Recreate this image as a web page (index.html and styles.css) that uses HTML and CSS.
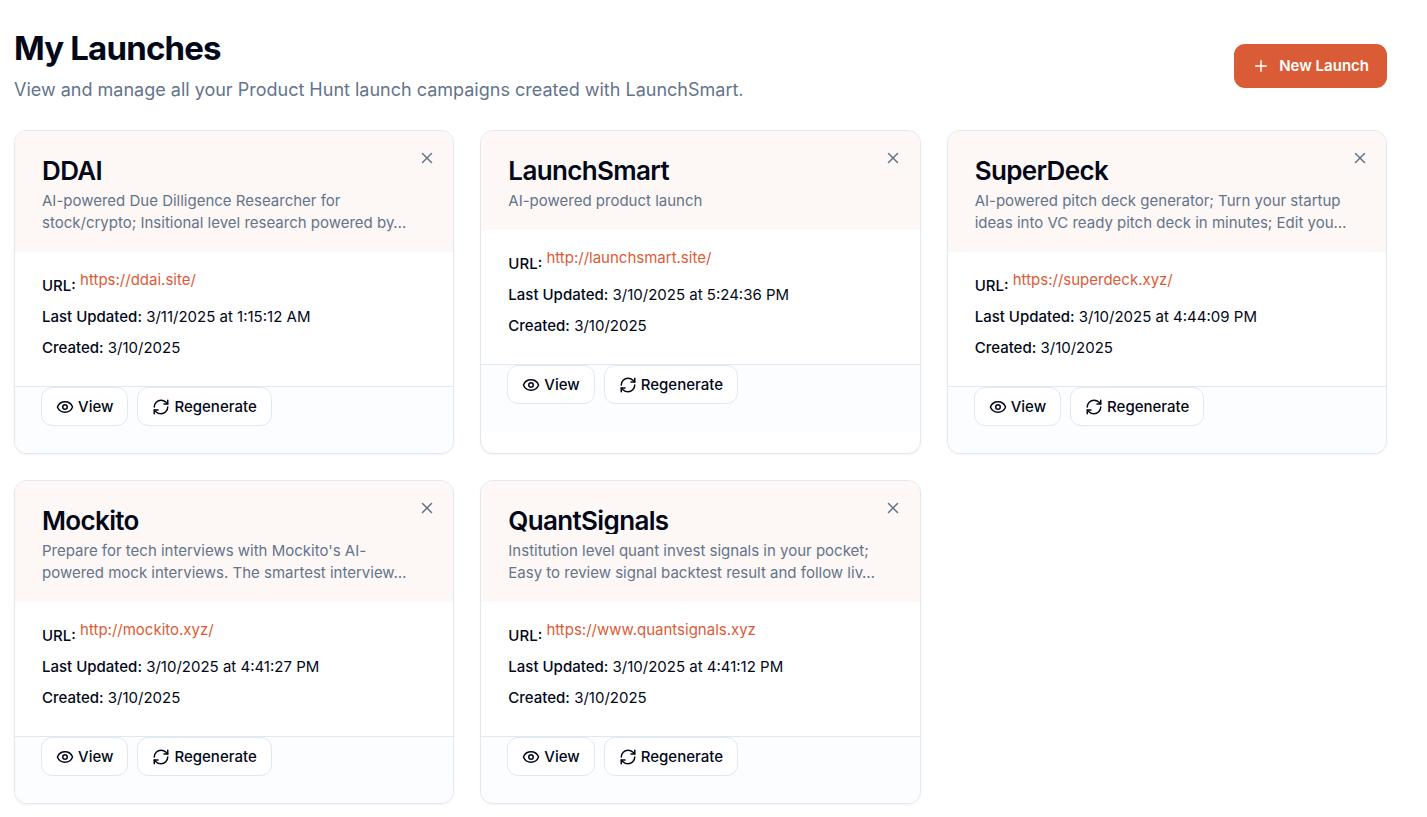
FILE: index.html
```html
<!DOCTYPE html>
<html lang="en">
<head>
    <meta charset="UTF-8">
    <meta name="viewport" content="width=device-width, initial-scale=1.0">
    <title>My Launches</title>
    <link rel="stylesheet" href="styles.css">
</head>
<body>

    <!-- Shared icons -->
    <svg class="sprite" aria-hidden="true">
        <symbol id="icon-plus" viewBox="0 0 24 24">
            <path d="M5 12h14"/>
            <path d="M12 5v14"/>
        </symbol>
        <symbol id="icon-close" viewBox="0 0 24 24">
            <path d="M18 6 6 18"/>
            <path d="m6 6 12 12"/>
        </symbol>
        <symbol id="icon-eye" viewBox="0 0 24 24">
            <path d="M2.062 12.348a1 1 0 0 1 0-.696 10.75 10.75 0 0 1 19.876 0 1 1 0 0 1 0 .696 10.75 10.75 0 0 1-19.876 0"/>
            <circle cx="12" cy="12" r="3"/>
        </symbol>
        <symbol id="icon-refresh" viewBox="0 0 24 24">
            <path d="M3 12a9 9 0 0 1 9-9 9.75 9.75 0 0 1 6.74 2.74L21 8"/>
            <path d="M21 3v5h-5"/>
            <path d="M21 12a9 9 0 0 1-9 9 9.75 9.75 0 0 1-6.74-2.74L3 16"/>
            <path d="M8 16H3v5"/>
        </symbol>
    </svg>

    <main class="page">
        <header class="page-header">
            <div>
                <h1>My Launches</h1>
                <p class="subtitle">View and manage all your Product Hunt launch campaigns created with LaunchSmart.</p>
            </div>
            <button class="new-launch" type="button">
                <svg class="icon"><use href="#icon-plus"/></svg>
                New Launch
            </button>
        </header>

        <section class="launch-grid">
            <article class="card">
                <div class="card-header">
                    <div class="card-heading">
                        <h2>DDAI</h2>
                        <p>AI-powered Due Dilligence Researcher for stock/crypto; Insitional level research powered by…</p>
                    </div>
                    <button class="close" type="button" aria-label="Delete DDAI">
                        <svg class="icon"><use href="#icon-close"/></svg>
                    </button>
                </div>
                <div class="card-body">
                    <p><strong>URL:</strong> <a href="https://ddai.site/">https://ddai.site/</a></p>
                    <p><strong>Last Updated:</strong> 3/11/2025 at 1:15:12 AM</p>
                    <p><strong>Created:</strong> 3/10/2025</p>
                </div>
                <div class="card-footer">
                    <button type="button"><svg class="icon"><use href="#icon-eye"/></svg>View</button>
                    <button type="button"><svg class="icon"><use href="#icon-refresh"/></svg>Regenerate</button>
                </div>
            </article>

            <article class="card">
                <div class="card-header">
                    <div class="card-heading">
                        <h2>LaunchSmart</h2>
                        <p>AI-powered product launch</p>
                    </div>
                    <button class="close" type="button" aria-label="Delete LaunchSmart">
                        <svg class="icon"><use href="#icon-close"/></svg>
                    </button>
                </div>
                <div class="card-body">
                    <p><strong>URL:</strong> <a href="http://launchsmart.site/">http://launchsmart.site/</a></p>
                    <p><strong>Last Updated:</strong> 3/10/2025 at 5:24:36 PM</p>
                    <p><strong>Created:</strong> 3/10/2025</p>
                </div>
                <div class="card-footer">
                    <button type="button"><svg class="icon"><use href="#icon-eye"/></svg>View</button>
                    <button type="button"><svg class="icon"><use href="#icon-refresh"/></svg>Regenerate</button>
                </div>
            </article>

            <article class="card">
                <div class="card-header">
                    <div class="card-heading">
                        <h2>SuperDeck</h2>
                        <p>AI-powered pitch deck generator; Turn your startup ideas into VC ready pitch deck in minutes; Edit you…</p>
                    </div>
                    <button class="close" type="button" aria-label="Delete SuperDeck">
                        <svg class="icon"><use href="#icon-close"/></svg>
                    </button>
                </div>
                <div class="card-body">
                    <p><strong>URL:</strong> <a href="https://superdeck.xyz/">https://superdeck.xyz/</a></p>
                    <p><strong>Last Updated:</strong> 3/10/2025 at 4:44:09 PM</p>
                    <p><strong>Created:</strong> 3/10/2025</p>
                </div>
                <div class="card-footer">
                    <button type="button"><svg class="icon"><use href="#icon-eye"/></svg>View</button>
                    <button type="button"><svg class="icon"><use href="#icon-refresh"/></svg>Regenerate</button>
                </div>
            </article>

            <article class="card">
                <div class="card-header">
                    <div class="card-heading">
                        <h2>Mockito</h2>
                        <p>Prepare for tech interviews with Mockito's AI-powered mock interviews. The smartest interview…</p>
                    </div>
                    <button class="close" type="button" aria-label="Delete Mockito">
                        <svg class="icon"><use href="#icon-close"/></svg>
                    </button>
                </div>
                <div class="card-body">
                    <p><strong>URL:</strong> <a href="http://mockito.xyz/">http://mockito.xyz/</a></p>
                    <p><strong>Last Updated:</strong> 3/10/2025 at 4:41:27 PM</p>
                    <p><strong>Created:</strong> 3/10/2025</p>
                </div>
                <div class="card-footer">
                    <button type="button"><svg class="icon"><use href="#icon-eye"/></svg>View</button>
                    <button type="button"><svg class="icon"><use href="#icon-refresh"/></svg>Regenerate</button>
                </div>
            </article>

            <article class="card">
                <div class="card-header">
                    <div class="card-heading">
                        <h2>QuantSignals</h2>
                        <p>Institution level quant invest signals in your pocket; Easy to review signal backtest result and follow liv…</p>
                    </div>
                    <button class="close" type="button" aria-label="Delete QuantSignals">
                        <svg class="icon"><use href="#icon-close"/></svg>
                    </button>
                </div>
                <div class="card-body">
                    <p><strong>URL:</strong> <a href="https://www.quantsignals.xyz">https://www.quantsignals.xyz</a></p>
                    <p><strong>Last Updated:</strong> 3/10/2025 at 4:41:12 PM</p>
                    <p><strong>Created:</strong> 3/10/2025</p>
                </div>
                <div class="card-footer">
                    <button type="button"><svg class="icon"><use href="#icon-eye"/></svg>View</button>
                    <button type="button"><svg class="icon"><use href="#icon-refresh"/></svg>Regenerate</button>
                </div>
            </article>
        </section>
    </main>

</body>
</html>
```
FILE: styles.css
```css
* {
    box-sizing: border-box;
    margin: 0;
    padding: 0;
}

body {
    font-family: Inter, sans-serif;
    font-size: 15px;
    line-height: 22px;
    color: #020817;
    background: #ffffff;
}

button {
    font: inherit;
    color: inherit;
    cursor: pointer;
}

.sprite {
    display: none;
}

.icon {
    width: 18px;
    height: 18px;
    flex-shrink: 0;
    fill: none;
    stroke: currentColor;
    stroke-width: 2;
    stroke-linecap: round;
    stroke-linejoin: round;
}

.page {
    padding: 28px 40px 14px 14px;
}

.page-header {
    display: flex;
    justify-content: space-between;
    align-items: center;
    margin-bottom: 26px;
}

h1 {
    font-size: 33px;
    line-height: 40px;
    font-weight: 700;
    letter-spacing: -0.025em;
}

.subtitle {
    margin-top: 8px;
    font-size: 18px;
    line-height: 28px;
    color: #64748b;
}

.new-launch {
    display: flex;
    align-items: center;
    gap: 9px;
    height: 44px;
    padding: 0 18px;
    border: none;
    border-radius: 11px;
    background: #da5c36; /* Brand orange */
    color: #ffffff;
    font-weight: 600;
}

.launch-grid {
    display: grid;
    grid-template-columns: repeat(3, 1fr);
    gap: 26px;
}

.card {
    border: 1px solid #e2e8f0;
    border-radius: 13px;
    background: #ffffff;
    box-shadow: 0 1px 2px rgba(0, 0, 0, 0.05);
    overflow: hidden;
}

.card-header {
    position: relative;
    padding: 26px 27px 18px;
    background: #fdf7f5;
}

h2 {
    font-size: 26px;
    line-height: 27px;
    font-weight: 600;
    letter-spacing: -0.025em;
    white-space: nowrap;
    overflow: hidden;
    text-overflow: ellipsis;
}

.card-heading p {
    margin-top: 6px;
    color: #64748b;
}

/* Sits over the top right corner of the header */
.close {
    position: absolute;
    top: 9px;
    right: 9px;
    display: flex;
    align-items: center;
    justify-content: center;
    width: 35px;
    height: 35px;
    border: none;
    border-radius: 11px;
    background: transparent;
    color: #64748b;
}

.card-body {
    display: flex;
    flex-direction: column;
    gap: 9px;
    padding: 17px 27px 27px;
}

.card-body strong {
    font-weight: 500;
}

.card-body a {
    display: inline-block;
    max-width: 250px;
    color: #da5c36;
    text-decoration: none;
    white-space: nowrap;
    overflow: hidden;
    text-overflow: ellipsis;
}

.card-body a:hover {
    text-decoration: underline;
}

.card-footer {
    display: flex;
    gap: 9px;
    padding: 0 26px 27px;
    border-top: 1px solid #e2e8f0;
    background: #fbfdff;
}

.card-footer button {
    display: flex;
    align-items: center;
    gap: 4px;
    height: 39px;
    padding: 0 14px;
    border: 1px solid #e2e8f0;
    border-radius: 11px;
    background: #ffffff;
    font-weight: 500;
}

.card-footer button:hover {
    background: #f1f5f9;
}

@media (max-width: 900px) {
    .launch-grid {
        grid-template-columns: 1fr;
    }
}
```
